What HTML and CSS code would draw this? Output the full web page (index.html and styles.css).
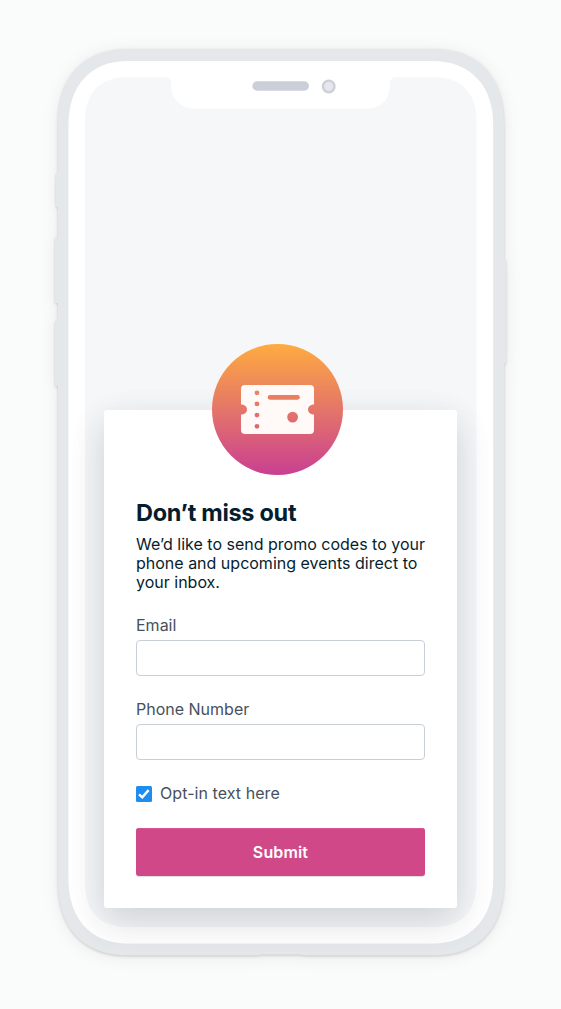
FILE: index.html
```html
<!DOCTYPE html>
<html lang="en">
<head>
<meta charset="utf-8">
<title>Don’t miss out</title>
<link rel="stylesheet" href="styles.css">
</head>
<body>
<main class="stage">
  <svg class="phone" width="561" height="1009" viewBox="0 0 561 1009" aria-hidden="true">
    <g class="phone-frame">
      <rect x="56" y="173" width="6" height="34" rx="1"/>
      <rect x="55" y="237.500" width="6" height="65.500" rx="1"/>
      <rect x="55" y="320.500" width="6" height="65.500" rx="1"/>
      <rect x="500" y="260" width="6" height="103.500" rx="1"/>
      <path d="M128 49H434C480 49 504 78 504 124V881C504 927 480 955.300 434 955.300H306L300 954.500H262L256 955.300H128C82 955.300 58 927 58 881V124C58 78 82 49 128 49Z"/>
    </g>
    <path class="phone-bezel" d="M128 61H432C471 61 493.200 86 493.200 125V879C493.200 918 471 943.500 432 943.500H128C90 943.500 68.500 918 68.500 879V125C68.500 86 90 61 128 61Z"/>
    <path class="phone-screen" d="M126 77.200H165Q171 77.200 171 83.500C171 99 180 108.500 195 108.500H367C382 108.500 390 99 390 83.500Q390 77.200 396 77.200H435C461 77.200 476.500 93 476.500 120V884C476.500 911 461 927 435 927H126C100 927 85 911 85 884V120C85 93 100 77.200 126 77.200Z"/>
    <rect class="speaker" x="252.300" y="81.300" width="56.700" height="9.400" rx="4.700"/>
    <circle class="camera" cx="328.700" cy="86.500" r="5.800"/>
  </svg>
  <section class="card">
    <svg class="badge" width="131" height="131" viewBox="0 0 131 131" aria-hidden="true">
      <defs>
        <linearGradient id="sunset" x1="0" y1="0" x2="0" y2="1">
          <stop offset="0" stop-color="#ffab40"/>
          <stop offset="1" stop-color="#c93f92"/>
        </linearGradient>
      </defs>
      <circle cx="65.500" cy="65.500" r="65.500" fill="url(#sunset)"/>
      <path class="ticket" fill-rule="evenodd" d="M33 41H98Q102 41 102 45V60.500C98 60.500 96 63 96 65.500S98 70.500 102 70.500V86Q102 90 98 90H33Q29 90 29 86V70.500C33 70.500 35 68 35 65.500S33 60.500 29 60.500V45Q29 41 33 41Z
        M42.600 48.800a2.400 2.400 0 1 0 4.800 0a2.400 2.400 0 1 0-4.800 0Z
        M42.600 59.900a2.400 2.400 0 1 0 4.800 0a2.400 2.400 0 1 0-4.800 0Z
        M42.600 71.100a2.400 2.400 0 1 0 4.800 0a2.400 2.400 0 1 0-4.800 0Z
        M42.600 82.300a2.400 2.400 0 1 0 4.800 0a2.400 2.400 0 1 0-4.800 0Z
        M58 51H85.500a2.350 2.350 0 0 1 0 4.700H58a2.350 2.350 0 0 1 0-4.700Z
        M75.200 73.100a5.400 5.400 0 1 0 10.800 0a5.400 5.400 0 1 0-10.800 0Z"/>
    </svg>
    <h1 class="title">Don’t miss out</h1>
    <p class="intro">We’d like to send promo codes to your<br>phone and upcoming events direct to<br>your inbox.</p>
    <form class="form">
      <label class="label" for="email">Email</label>
      <input class="field" id="email" type="email">
      <label class="label" for="phone">Phone Number</label>
      <input class="field" id="phone" type="tel">
      <label class="optin">
        <svg class="check" width="16" height="16" viewBox="0 0 16 16" aria-hidden="true">
          <rect width="16" height="16" rx="1.500" fill="#1e8df0"/>
          <path d="M3 8.300L6.300 11.300L12.600 4.200" fill="none" stroke="#fff" stroke-width="2.500"/>
        </svg>
        <span>Opt-in text here</span>
      </label>
      <button class="submit" type="button">Submit</button>
    </form>
  </section>
</main>
</body>
</html>
```
FILE: styles.css
```css
* { box-sizing: border-box; }
body {
  margin: 0;
  background: #fafcfb;
  font-family: Inter, "Liberation Sans", sans-serif;
  font-size: 16px;
  color: #061d2e;
}
.stage {
  position: relative;
  height: 1009px;
  padding: 410px 104px 101px;
  overflow: hidden;
}
.phone { position: absolute; inset: 0; }
.phone-frame {
  fill: #e4e8eb;
  filter: drop-shadow(0 1px 1.500px rgba(0, 0, 0, .17)) drop-shadow(0 2px 8px rgba(0, 0, 0, .07));
}
.phone-bezel { fill: #fff; }
.phone-screen { fill: #f5f7f9; }
.speaker { fill: #cbd0d8; }
.camera { fill: #e4e8eb; stroke: #cbd0d8; stroke-width: 2.300; }
.card {
  position: relative;
  display: flex;
  flex-direction: column;
  width: 353px;
  height: 498px;
  padding: 0 32px 32px;
  background: #fff;
  border-radius: 3px;
  box-shadow: 0 12px 40px rgba(20, 30, 36, .07), 0 12px 36px rgba(40, 50, 60, .12);
}
.badge { align-self: center; margin: -66px 0 0 -6px; }
.ticket { fill: #fff9f8; }
.title {
  margin: 23px 0 0;
  font: 700 23.5px/30px Inter, sans-serif;
  letter-spacing: -.3px;
  white-space: nowrap;
}
.intro {
  margin: 7px 0 0;
  line-height: 19px;
  white-space: nowrap;
}
.form { display: flex; flex-direction: column; margin-top: 23px; color: #46515d; }
.label { line-height: 20px; margin-bottom: 5px; }
.field {
  width: 289px;
  height: 36px;
  margin: 0 0 23px;
  padding: 0 12px;
  background: #fff;
  border: 1px solid #c9cfd8;
  border-radius: 4px;
}
.optin { display: flex; align-items: center; gap: 8px; height: 20px; letter-spacing: .06px; }
.check { position: relative; top: 1px; }
.submit {
  height: 48px;
  margin-top: 25px;
  padding: 0;
  border: 0;
  border-radius: 3px;
  background: #d14889;
  box-shadow: 0 1px 1px rgba(28, 39, 60, .16), inset 0 1px #d6558f;
  color: #fff;
  font: 600 16px/46px Inter, sans-serif;
  letter-spacing: .15px;
}
```
